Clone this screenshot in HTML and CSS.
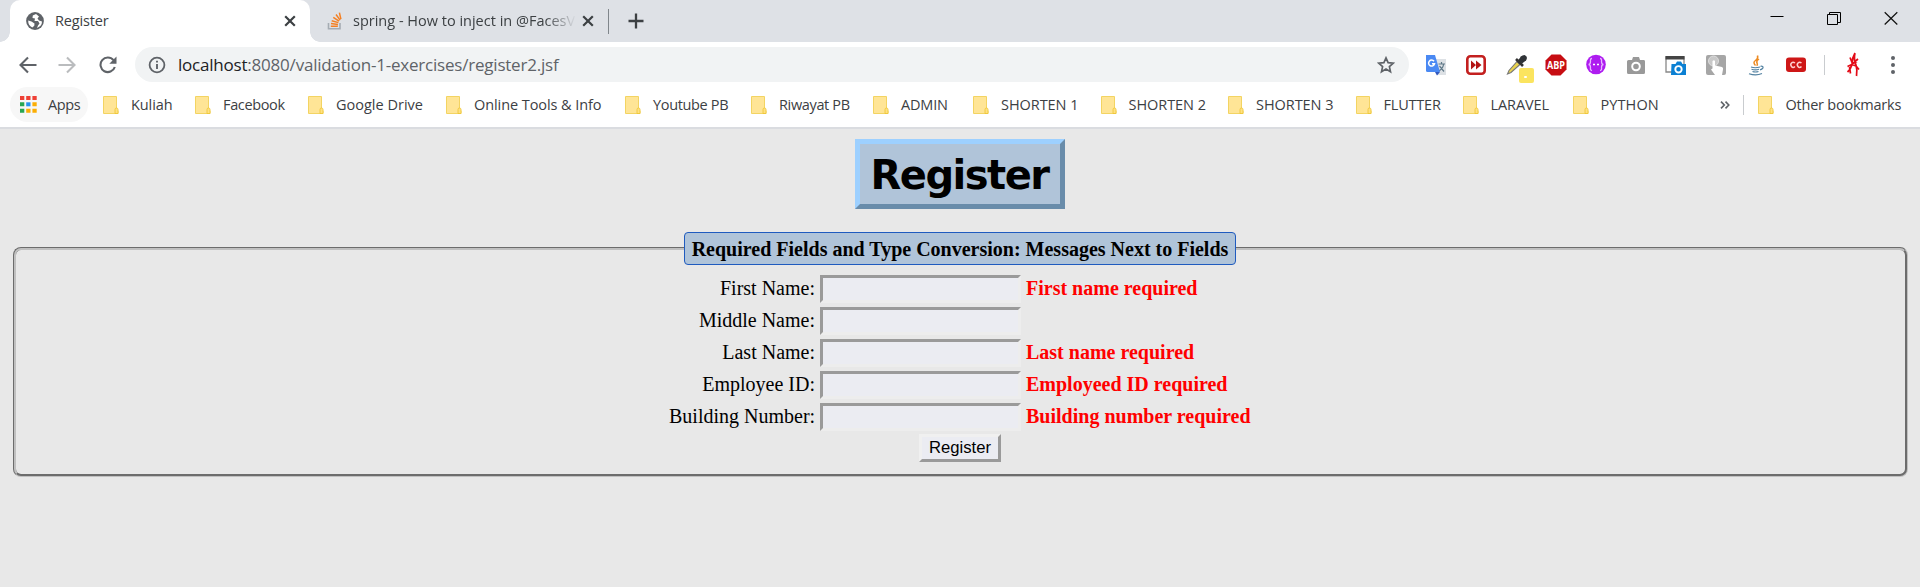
FILE: index.html
```html
<!DOCTYPE html>
<html lang="en">
<head>
<meta charset="utf-8">
<title>Register</title>
<link rel="stylesheet" href="styles.css">
</head>
<body>
<svg width="0" height="0" class="defs"><defs>
<symbol id="folder" viewBox="0 0 17 20"><path d="M1.500 1.500h13v13.200l1.500 1v2.800H1.500z" fill="#ffe596" stroke="#f3d462"/><path d="M13 18v-3.500q0-1.500 1.500-1.500t1.500 1.500V18.500H13z" fill="#ffe182" stroke="#edc431" stroke-width=".8"/></symbol>
<symbol id="x" viewBox="0 0 12 12"><path d="M1.200 1.200l9.600 9.600M10.800 1.200L1.200 10.800" stroke="#3c4043" stroke-width="2.200"/></symbol>
</defs></svg>
<header class="browser">
<div class="tabs">
<div class="tab active"><svg class="fav" viewBox="0 0 18 18"><circle cx="9" cy="9" r="8.900" fill="#5f6368"/><path d="M10 2L6.800 3.500 6.500 6 9 6.500 8.500 9H12l1.500 2.500-1.500 2-1 2.500Q16 14 16 9.500L13 8.500 11.500 6.500 13 4.500zM2.200 8.500L5.500 9.500 8.500 11.500 8.300 13.800 6.300 15.500Q2 13.500 2.200 8.500z" fill="#fff"/></svg><span class="title">Register</span><svg class="close"><use href="#x"/></svg></div>
<div class="tab idle"><svg class="so" viewBox="0 0 16 18"><path d="M1.500 11v5.800h11.500V11" fill="none" stroke="#a5acb3" stroke-width="1.600"/><path d="M3.800 14.300h7M4 11.600l7 .8M4.700 8.700l6.700 1.900M6.300 5.300l5.700 3.900M9 2.500l4.100 5.600M12.400.7l1.500 6.500" stroke="#f48024" stroke-width="1.500"/></svg><span class="title fade">spring - How to inject in @FacesV</span><svg class="close"><use href="#x"/></svg></div>
<i class="tabsep"></i>
<svg class="plus" viewBox="0 0 16 16"><path d="M8 .5v15M.5 8h15" stroke="#3c4043" stroke-width="2.300"/></svg>
<div class="win"><svg viewBox="0 0 14 14"><path d="M.5 5.500h13" stroke="#000"/></svg><svg viewBox="0 0 14 14"><path d="M.5 3.500h10v10H.5zM2.500 3V1.500h11v10H11" fill="none" stroke="#000"/></svg><svg viewBox="0 0 14 14"><path d="M.7 1.200l12.600 12.300M13.300 1.200L.7 13.500" stroke="#111" stroke-width="1.200"/></svg></div>
</div>
<div class="toolbar">
<div class="nav">
<svg viewBox="0 0 18 18"><path d="M17.500 9H2M9 1.500L1.500 9 9 16.500" fill="none" stroke="#5f6368" stroke-width="2.100"/></svg>
<svg viewBox="0 0 18 18"><path d="M.5 9H16M9 1.500L16.500 9 9 16.500" fill="none" stroke="#babcbe" stroke-width="2.100"/></svg>
<svg viewBox="0 0 18 18"><path d="M15.800 11A7.300 7.300 0 1 1 14.500 4.200" fill="none" stroke="#5f6368" stroke-width="2.100"/><path d="M17.500.5v7.200h-7.200z" fill="#5f6368"/></svg>
</div>
<div class="omni"><svg class="info" viewBox="0 0 18 18"><circle cx="9" cy="9" r="7.400" fill="none" stroke="#5f6368" stroke-width="1.800"/><path d="M9 8v5M9 4.700v1.900" stroke="#5f6368" stroke-width="1.900"/></svg><span class="url"><b>localhost</b>:8080/validation-1-exercises/register2.jsf</span><svg class="star" viewBox="0 0 18 18"><path d="M9 1.900l2.100 4.700 5.200.5-3.900 3.500 1.100 5.100L9 13.100l-4.500 2.600 1.100-5.100L1.700 7.100l5.200-.5z" fill="none" stroke="#5f6368" stroke-width="1.700"/></svg></div>
<div class="exts">
<svg viewBox="0 0 24 24"><path d="M11 6h11v16H13z" fill="#dde1e5"/><path d="M14.500 11h6.500M17.500 9v2M15 18c3-2 4.500-4 4.500-7M15.500 13l4.500 5.500" fill="none" stroke="#607988" stroke-width="1.200"/><path d="M2 2h9l5 17H3.500Q2 19 2 17.500z" fill="#4a89f3"/><path d="M11 19h5l-3 3.500z" fill="#3158be"/><path d="M10 8.300A3 3 0 1 0 10.500 10.800H8" fill="none" stroke="#fff" stroke-width="1.500"/></svg>
<svg viewBox="0 0 24 24"><rect x="3.300" y="3.300" width="17.400" height="17.400" rx="3" fill="#fff" stroke="#c3201f" stroke-width="2.600"/><path d="M7 7.500l5 4.500-5 4.500zM12 7.500l5.500 4.500-5.500 4.500z" fill="#b31515"/></svg>
<div class="pick"><svg viewBox="0 0 24 24"><path d="M13 8.500l3 3L7 19.500 3.500 21 5 17.500z" fill="#e9d34e" stroke="#777" stroke-width="1.100"/><path d="M12 6l7 7M14 9l5-5" stroke="#333" stroke-width="2.600"/><path d="M15 8q1-6 5.500-6 4 1.500 1.500 5.500L18 10.500z" fill="#303438"/></svg><i></i></div>
<svg viewBox="0 0 24 24"><path d="M7.500 1.500h9l6 6v9l-6 6h-9l-6-6v-9z" fill="#c70d12"/><text x="12" y="15.600" text-anchor="middle" font-size="9.800" font-weight="700" font-family="Open Sans" fill="#fff" textLength="18" lengthAdjust="spacingAndGlyphs">ABP</text></svg>
<svg viewBox="0 0 24 24"><circle cx="12" cy="11.500" r="9.800" fill="#ae1cf0"/><path d="M8 5.500q-2 0-1.500 3 0 3-2 3 2 0 2 3-.5 3 1.500 3M16 5.500q2 0 1.500 3 0 3 2 3-2 0-2 3 .5 3-1.500 3" fill="none" stroke="#e7b7ff" stroke-width="1.300"/><path d="M9 11.500h2M13 11.500h2" stroke="#fff" stroke-width="1.600"/></svg>
<svg viewBox="0 0 24 24"><path d="M4.500 7H8l1-3h6l1 3h4q1 0 1 1.500v11q0 1.500-1.500 1.500h-15Q3 21 3 19.500v-11Q3 7 4.500 7z" fill="#999"/><circle cx="12" cy="13.500" r="3.800" fill="none" stroke="#fff" stroke-width="2"/></svg>
<svg viewBox="0 0 24 24"><path d="M2 4h18v15H2z" fill="#fff" stroke="#888" stroke-width="1.300"/><path d="M1.500 3h19v3.500h-19z" fill="#444"/><path d="M7.500 11h4l1.500-2.500h4L18.500 11h3.500v11H7z" fill="#0b80d3"/><circle cx="14.500" cy="16.300" r="3.200" fill="none" stroke="#fff" stroke-width="1.900"/></svg>
<svg viewBox="0 0 24 24"><rect x="2" y="2" width="20" height="20" rx="2" fill="#a6a6a6"/><circle cx="9.500" cy="8" r="5" fill="#c8c8c8" stroke="#ddd"/><path d="M8.500 8q1.500-1.500 2.500 0v4.500l7 1.500q1.500.5 1 2.500l-1 5.500h-7l-4-5.500 1.500-1z" fill="#fff"/></svg>
<svg viewBox="0 0 24 24"><path d="M13.500 2.500q1 3-2 5t0 5M15 6q-3 2-2 4t-.5 2.500" fill="none" stroke="#ed8b23" stroke-width="1.500"/><path d="M7 14q4 1.500 9 0M7.500 16.300q4 1.300 7.500 0M8.500 18.500q3 1 6 0M5 20.700q7 2.500 13-.2M16.500 13.300q3-.5 2.500 1.500-1 1.500-3 2" fill="none" stroke="#5382a1" stroke-width="1.200"/></svg>
<svg viewBox="0 0 24 24"><rect x="2" y="4.500" width="20" height="14.500" rx="3" fill="#ce1717"/><path d="M11 10Q9 8.500 7.500 10t0 3.500 3.500 0M17.500 10Q15.500 8.500 14 10t0 3.500 3.500 0" fill="none" stroke="#ffd0d0" stroke-width="1.500"/></svg>
</div>
<i class="div"></i>
<svg class="avatar" viewBox="0 0 14 26"><path d="M9 1Q6 6 6.300 11 5 17 1.500 20M9 1q-1.500 6 1 12 1.500 5 .5 11M4 5.500l2.500 6L11 9.500M1.500 14.500l4.500-2 4 1.500 3 3.500M3.500 15l1 6.500M6 12l6-5" fill="none" stroke="#e30b17" stroke-width="1.700"/></svg>
<svg class="dots" viewBox="0 0 6 18"><circle cx="3" cy="2" r="2" fill="#5f6368"/><circle cx="3" cy="9" r="2" fill="#5f6368"/><circle cx="3" cy="16" r="2" fill="#5f6368"/></svg>
</div>
<nav class="marks">
<span class="apps"><svg viewBox="0 0 17 17"><path d="M0 0h4.300v4H0zM6.200 0h4.300v4H6.200zM12.400 0h4.300v4h-4.300z" fill="#ee4035"/><path d="M0 6.300h4.300v4H0zM0 12.700h4.300v4H0z" fill="#28a653"/><path d="M6.200 6.300h4.300v4H6.200z" fill="#2692f0"/><path d="M12.400 6.300h4.300v4h-4.300zM6.200 12.700h4.300v4H6.200zM12.400 12.700h4.300v4h-4.300z" fill="#fbae05"/></svg>Apps</span>
<span class="bm w1"><svg><use href="#folder"/></svg>Kuliah</span>
<span class="bm w2"><svg><use href="#folder"/></svg>Facebook</span>
<span class="bm w3"><svg><use href="#folder"/></svg>Google Drive</span>
<span class="bm w4"><svg><use href="#folder"/></svg>Online Tools &amp; Info</span>
<span class="bm w5"><svg><use href="#folder"/></svg>Youtube PB</span>
<span class="bm w6"><svg><use href="#folder"/></svg>Riwayat PB</span>
<span class="bm w7"><svg><use href="#folder"/></svg>ADMIN</span>
<span class="bm w8"><svg><use href="#folder"/></svg>SHORTEN 1</span>
<span class="bm w8"><svg><use href="#folder"/></svg>SHORTEN 2</span>
<span class="bm w8"><svg><use href="#folder"/></svg>SHORTEN 3</span>
<span class="bm w9"><svg><use href="#folder"/></svg>FLUTTER</span>
<span class="bm w10"><svg><use href="#folder"/></svg>LARAVEL</span>
<span class="bm w11"><svg><use href="#folder"/></svg>PYTHON</span>
<svg class="more" viewBox="0 0 10 8"><path d="M1 .6L4.300 4 1 7.400M5.500.6L8.800 4 5.500 7.400" fill="none" stroke="#5f6368" stroke-width="1.600"/></svg>
<i class="div tall"></i>
<span class="bm other"><svg><use href="#folder"/></svg>Other bookmarks</span>
</nav>
</header>
<main class="page">
<h1 class="heading"><span>Register</span></h1>
<fieldset class="form">
<legend>Required Fields and Type Conversion: Messages Next to Fields</legend>
<div class="grid">
<label for="a">First Name:</label><input id="a"><strong>First name required</strong>
<label for="b">Middle Name:</label><input id="b"><strong></strong>
<label for="c">Last Name:</label><input id="c"><strong>Last name required</strong>
<label for="d">Employee ID:</label><input id="d"><strong>Employeed ID required</strong>
<label for="e">Building Number:</label><input id="e"><strong>Building number required</strong>
</div>
<button class="submit" type="button">Register</button>
</fieldset>
</main>
</body>
</html>
```
FILE: styles.css
```css
* { box-sizing: border-box; }
body { margin: 0; height: 587px; overflow: hidden; background: #e8e8e8; font-family: "Liberation Serif", serif; }
svg { display: block; flex: none; }
.defs { position: absolute; }
.browser { height: 129px; background: #fff; border-bottom: 2px solid #dadce0; font-family: "Open Sans", sans-serif; color: #3c4043; }
.tabs { height: 42px; background: #dee1e6; display: flex; align-items: center; padding-left: 10px; }
.tab { height: 42px; display: flex; align-items: center; font-size: 14.500px; letter-spacing: -0.150px; white-space: nowrap; }
.title { flex: 1; margin-top: -1px; }
.active { position: relative; width: 300px; background: #fff; border-radius: 10px 10px 0 0; padding: 0 14px 0 16px; }
.active::before, .active::after { content: ""; position: absolute; bottom: 0; width: 10px; height: 10px; }
.active::before { left: -10px; background: radial-gradient(circle at 0 0, #dee1e6 9.500px, #fff 10px); }
.active::after { right: -10px; background: radial-gradient(circle at 100% 0, #dee1e6 9.500px, #fff 10px); }
.fav { width: 18px; height: 18px; margin-right: 11px; }
.idle { width: 298px; padding: 0 14px 0 17px; }
.so { width: 16px; height: 18px; margin-right: 10px; }
.fade { flex: none; width: 223px; margin-right: 6px; letter-spacing: 0; -webkit-mask-image: linear-gradient(90deg, #000 192px, transparent 223px); mask-image: linear-gradient(90deg, #000 192px, transparent 223px); }
.close { width: 12px; height: 12px; }
.tabsep { width: 1px; height: 25px; background: #80868b; }
.plus { width: 16px; height: 16px; margin-left: 19px; }
.win { margin-left: auto; display: flex; gap: 43px; padding: 0 22px 6px 0; }
.win svg { width: 14px; height: 14px; }
.toolbar { height: 45px; display: flex; align-items: center; padding-left: 19px; }
.nav { display: flex; gap: 21px; width: 116px; }
.nav svg { width: 18px; height: 18px; }
.nav svg:last-child { margin-left: 2px; }
.omni { width: 1274px; height: 35px; border-radius: 18px; background: #f1f3f4; display: flex; align-items: center; padding: 0 14px 0 13px; }
.info { width: 18px; height: 18px; margin-right: 12px; }
.url { flex: 1; font-size: 17px; letter-spacing: -0.210px; color: #5f6368; margin-top: -1px; }
.url b { font-weight: 400; color: #202124; }
.star { width: 18px; height: 18px; }
.exts { display: flex; gap: 16px; margin-left: 15px; }
.exts svg { width: 24px; height: 24px; }
.pick { position: relative; }
.pick i { position: absolute; left: 15px; top: 15px; width: 15px; height: 15px; border-radius: 2px; background: radial-gradient(circle at 6.500px 9px, #fff 1px, #fbe45f 1.500px); }
.div { width: 1px; height: 20px; background: #c9cccf; margin-left: 16px; }
.avatar { width: 14px; height: 26px; margin-left: 21px; }
.dots { width: 6px; height: 18px; margin-left: 30px; }
.marks { height: 35px; display: flex; align-items: center; padding-left: 10px; font-size: 14.500px; letter-spacing: -0.350px; white-space: nowrap; }
.apps { width: 78px; height: 35px; border-radius: 18px; background: #f7f7f7; display: flex; align-items: center; gap: 11px; padding-left: 10px; margin-right: 14px; }
.apps svg { width: 17px; height: 17px; }
.bm { flex: none; display: flex; align-items: center; gap: 12px; }
.bm svg { width: 17px; height: 20px; }
.w1 { width: 92px; letter-spacing: -0.100px; }
.w2 { width: 113px; }
.w3 { width: 138px; letter-spacing: 0; }
.w4 { width: 179px; letter-spacing: -0.080px; }
.w5 { width: 126px; }
.w6 { width: 122px; }
.w7 { width: 100px; letter-spacing: -0.200px; }
.w8 { width: 127.500px; letter-spacing: -0.050px; }
.w9 { width: 107px; letter-spacing: -0.200px; }
.w10 { width: 110px; letter-spacing: -0.100px; }
.w11 { width: 148px; letter-spacing: 0.100px; }
.other { letter-spacing: -0.230px; }
.more { width: 10px; height: 8px; }
.tall { margin-left: 13px; margin-right: 13px; }
.page { padding: 10px 12px 0 13px; text-align: center; }
.heading { position: relative; left: -0.500px; width: 210px; height: 70px; margin: 0 auto 23px; border: 5px solid; border-color: #9dd0ff #698caa #698caa #9dd0ff; background: #b0c4d9; font: 700 40px/63px "DejaVu Sans", sans-serif; display: flex; justify-content: center; letter-spacing: -1.500px; }
.heading span { margin-left: -1px; }
.form { margin: 0; height: 245px; padding: 0 1px 0 0; border: 3px groove #c0c0c0; border-radius: 8px; font-size: 20px; }
.form legend { height: 33px; margin: 0 auto; padding: 0 7px; border: 1px solid #1f5bbf; border-radius: 4px; background: #b0c4d9; font-weight: 700; line-height: 32px; white-space: nowrap; }
.grid { display: grid; grid-template-columns: 146px 201px 225px; column-gap: 5px; grid-auto-rows: 28px; row-gap: 4px; width: 582px; margin: 10px auto 3px; line-height: 27px; }
.grid label { text-align: right; white-space: nowrap; }
.grid strong { text-align: left; color: red; white-space: nowrap; }
.grid input { width: 201px; height: 28px; border: 3px solid; border-color: #9a9a9a #ededed #ededed #9a9a9a; background: #ebecf2; }
.submit { display: block; width: 82px; height: 28px; margin: 0 auto; padding: 0; border: 3px solid; border-color: #f0f0f0 #9a9a9a #9a9a9a #f0f0f0; background: #ebecf2; color: #000; font: 16.670px/20px "Liberation Sans", sans-serif; }
```
